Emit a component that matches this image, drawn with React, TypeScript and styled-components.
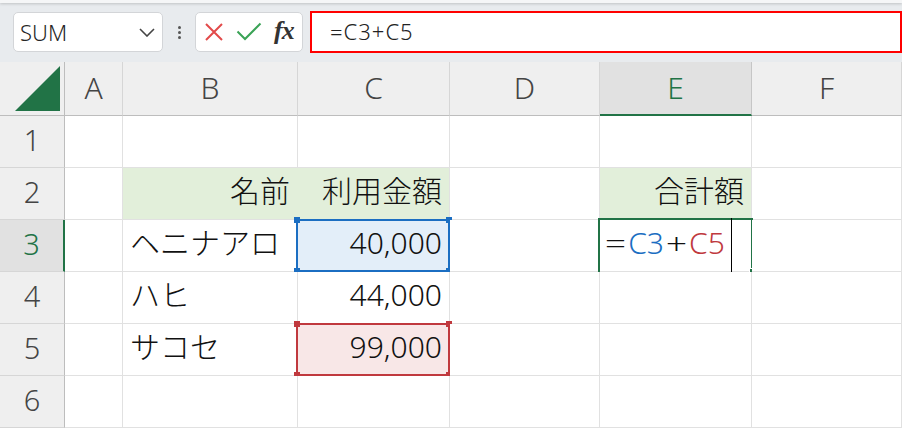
import React from 'react';
import styled, { createGlobalStyle } from 'styled-components';

const GlobalStyle = createGlobalStyle`
  html, body {
    margin: 0;
    padding: 0;
    background: #ffffff;
    overflow: hidden;
  }
`;

const GREEN = '#217346';
const BLUE = '#1b6ec2';
const RED = '#c0393e';

type Align = 'left' | 'right' | 'center';

interface CellData {
  text?: React.ReactNode;
  align?: Align;
  fill?: string;
  joinRight?: boolean;
  range?: 'blue' | 'red';
  active?: boolean;
}

const COLS = ['A', 'B', 'C', 'D', 'E', 'F'];

const rows: CellData[][] = [
  [{}, {}, {}, {}, {}, {}],
  [
    {},
    { text: '名前', align: 'right', fill: '#e2efda', joinRight: true },
    { text: '利用金額', align: 'right', fill: '#e2efda' },
    {},
    { text: '合計額', align: 'right', fill: '#e2efda' },
    {},
  ],
  [
    {},
    { text: 'ヘニナアロ' },
    { text: '40,000', align: 'right', fill: '#e3eef9', range: 'blue' },
    {},
    { active: true },
    {},
  ],
  [{}, { text: 'ハヒ' }, { text: '44,000', align: 'right' }, {}, {}, {}],
  [
    {},
    { text: 'サコセ' },
    { text: '99,000', align: 'right', fill: '#f8e7e7', range: 'red' },
    {},
    {},
    {},
  ],
  [{}, {}, {}, {}, {}, {}],
];

const App: React.FC = () => {
  return (
    <>
      <GlobalStyle />
      <Root>
        <TopEdge />

        {/* formula bar */}
        <FormulaBar>
          <NameBox>
            <span>SUM</span>
            <svg width="16" height="9" viewBox="0 0 16 9">
              <path d="M1 1 L8 8 L15 1" fill="none" stroke="#444" strokeWidth="1.6" />
            </svg>
          </NameBox>
          <Dots>
            <i />
            <i />
            <i />
          </Dots>
          <FuncBox>
            <svg width="20" height="20" viewBox="0 0 20 20">
              <path d="M2 2 L18 18 M18 2 L2 18" stroke="#e24a4a" strokeWidth="2" />
            </svg>
            <svg width="26" height="20" viewBox="0 0 26 20">
              <path d="M1.5 9.5 L9 17 L24.5 1.5" fill="none" stroke="#3aa356" strokeWidth="2" />
            </svg>
            <FxLabel>fx</FxLabel>
          </FuncBox>
          <FormulaInput>=C3+C5</FormulaInput>
        </FormulaBar>

        {/* sheet */}
        <Sheet>
          <Corner>
            <svg width="46" height="46" viewBox="0 0 46 46">
              <polygon points="0,45 45,45 45,0" fill={GREEN} />
            </svg>
          </Corner>
          {COLS.map(c => (
            <ColHead key={c} $selected={c === 'E'}>
              {c}
            </ColHead>
          ))}

          {rows.map((row, ri) => (
            <React.Fragment key={ri}>
              <RowHead $selected={ri === 2}>{ri + 1}</RowHead>
              {row.map((cell, ci) => (
                <Cell
                  key={ci}
                  $align={cell.align ?? 'left'}
                  $fill={cell.fill}
                  $joinRight={cell.joinRight}
                >
                  {cell.text}
                  {cell.range && (
                    <RangeBox $color={cell.range === 'blue' ? BLUE : RED}>
                      <Handle $color={cell.range === 'blue' ? BLUE : RED} $v="top" $h="left" />
                      <Handle $color={cell.range === 'blue' ? BLUE : RED} $v="top" $h="right" />
                      <Handle $color={cell.range === 'blue' ? BLUE : RED} $v="bottom" $h="left" />
                      <Handle $color={cell.range === 'blue' ? BLUE : RED} $v="bottom" $h="right" />
                    </RangeBox>
                  )}
                  {cell.active && (
                    <>
                      <Op $first>=</Op>
                      <Ref $color={BLUE}>C3</Ref>
                      <Op>+</Op>
                      <Ref $color={RED}>C5</Ref>
                      <ActiveBox>
                        <FillHandle />
                      </ActiveBox>
                      <Caret />
                    </>
                  )}
                </Cell>
              ))}
            </React.Fragment>
          ))}
        </Sheet>
      </Root>
    </>
  );
};

export default App;

/*** style ***/
const Root = styled.div`
  width: 902px;
  height: 428px;
  display: flex;
  flex-direction: column;
  background: #e8ebee;
  overflow: hidden;
`;

const TopEdge = styled.div`
  height: 3px;
  background: #f5f6f7;
  box-shadow: 0 1px 3px rgba(0, 0, 0, 0.18);
`;

const FormulaBar = styled.div`
  height: 59px;
  display: flex;
  align-items: flex-start;
  padding: 9px 0 0 13px;
  box-sizing: border-box;
`;

const NameBox = styled.div`
  width: 150px;
  height: 40px;
  box-sizing: border-box;
  display: flex;
  align-items: center;
  justify-content: space-between;
  padding: 0 7px 0 6px;
  background: #ffffff;
  border: 1px solid #d3d5d8;
  border-radius: 5px;
  font: 300 22px 'Noto Sans', sans-serif;
  color: #262626;
`;

const Dots = styled.div`
  width: 32px;
  height: 40px;
  display: flex;
  flex-direction: column;
  align-items: center;
  justify-content: center;
  gap: 2px;

  i {
    width: 3px;
    height: 3px;
    border-radius: 50%;
    background: #555;
  }
`;

const FuncBox = styled.div`
  width: 108px;
  height: 40px;
  box-sizing: border-box;
  display: flex;
  align-items: center;
  gap: 12px;
  padding-left: 8px;
  background: #ffffff;
  border: 1px solid #d3d5d8;
  border-radius: 5px;
`;

const FxLabel = styled.span`
  font: italic bold 26px 'Liberation Serif', serif;
  color: #333;
  letter-spacing: -1px;
  margin-top: -3px;
`;

const FormulaInput = styled.div`
  flex: 1;
  height: 42px;
  margin: -1px 0 0 7px;
  box-sizing: border-box;
  border: 2px solid #ff0000;
  background: #ffffff;
  padding-left: 18px;
  font: 300 22px/37px 'Noto Sans', sans-serif;
  color: #222;
  letter-spacing: 1px;
`;

const Sheet = styled.div`
  flex: 1;
  display: grid;
  grid-template-columns: 65px 58px 175px 152px 150px 152px 1fr;
  grid-template-rows: 54px repeat(6, 52px);
  background: #ffffff;
`;

const Corner = styled.div`
  background: #efefef;
  border-right: 1px solid #bdbdbd;
  border-bottom: 1px solid #bdbdbd;
  display: flex;
  align-items: flex-end;
  justify-content: flex-end;
  padding: 0 3px 3px 0;
`;

const ColHead = styled.div<{ $selected?: boolean }>`
  box-sizing: border-box;
  background: ${p => (p.$selected ? '#e1e1e1' : '#efefef')};
  border-right: 1px solid ${p => (p.$selected ? '#c6c6c6' : '#d6d6d6')};
  border-bottom: ${p => (p.$selected ? `2px solid ${GREEN}` : '1px solid #bdbdbd')};
  color: ${p => (p.$selected ? GREEN : '#444')};
  font: 300 30px/52px 'Noto Sans', sans-serif;
  text-align: center;
`;

const RowHead = styled.div<{ $selected?: boolean }>`
  box-sizing: border-box;
  background: ${p => (p.$selected ? '#e1e1e1' : '#efefef')};
  border-right: ${p => (p.$selected ? `2px solid ${GREEN}` : '1px solid #bdbdbd')};
  border-bottom: 1px solid #d6d6d6;
  color: ${p => (p.$selected ? GREEN : '#444')};
  font: 300 29px/47px 'Noto Sans', sans-serif;
  text-align: center;
`;

const Cell = styled.div<{ $align: Align; $fill?: string; $joinRight?: boolean }>`
  position: relative;
  box-sizing: border-box;
  padding: 0 7px;
  background: ${p => p.$fill ?? '#ffffff'};
  border-right: 1px solid ${p => (p.$joinRight && p.$fill ? p.$fill : '#e1e1e1')};
  border-bottom: 1px solid #e1e1e1;
  font: 300 30px/45px 'Noto Sans', 'Noto Sans CJK JP', sans-serif;
  color: #111;
  text-align: ${p => p.$align};
  white-space: nowrap;
`;

const Op = styled.span<{ $first?: boolean }>`
  display: inline-block;
  margin: ${p => (p.$first ? '0 4px 0 0' : '0 4px')};
  transform: scaleX(1.25);
`;

const RangeBox = styled.div<{ $color: string }>`
  position: absolute;
  top: -1px;
  left: -2px;
  right: -1px;
  bottom: -1px;
  border: 2px solid ${p => p.$color};
  pointer-events: none;
`;

const Handle = styled.span<{ $color: string; $v: 'top' | 'bottom'; $h: 'left' | 'right' }>`
  position: absolute;
  width: 6px;
  height: 6px;
  background: ${p => p.$color};
  ${p => p.$v}: -4px;
  ${p => p.$h}: -4px;
`;

const Ref = styled.span<{ $color: string }>`
  color: ${p => p.$color};
`;

const ActiveBox = styled.div`
  position: absolute;
  top: -2px;
  left: -2px;
  right: -2px;
  bottom: -1px;
  border: 2px solid ${GREEN};
  border-bottom: none;
  pointer-events: none;
`;

const FillHandle = styled.span`
  position: absolute;
  right: -2px;
  bottom: -3px;
  width: 3px;
  height: 6px;
  background: ${GREEN};
  border-left: 1px solid #ffffff;
  border-top: 1px solid #ffffff;
`;

const Caret = styled.span`
  position: absolute;
  left: 131px;
  top: -2px;
  width: 1px;
  height: 54px;
  background: #000;
`;
